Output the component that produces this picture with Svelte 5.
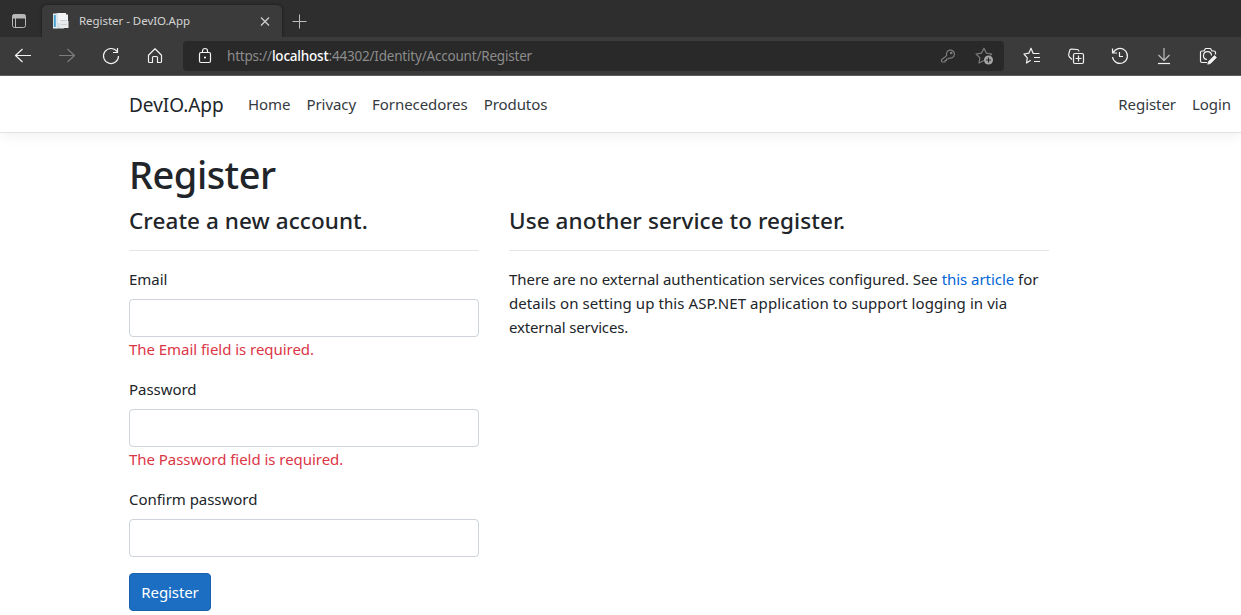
<script>
  const navigation = ['Home', 'Privacy', 'Fornecedores', 'Produtos'];
  const fields = [
    { id: 'email', label: 'Email', type: 'email', error: 'The Email field is required.' },
    { id: 'password', label: 'Password', type: 'password', error: 'The Password field is required.' },
    { id: 'confirm', label: 'Confirm password', type: 'password', error: '' }
  ];
</script>

<div class="browser">
  <div class="tabs">
    <svg class="panel" width="16" height="16" viewBox="0 0 16 16" fill="none" stroke="#b8b8b8">
      <rect x="1.5" y="1.5" width="13" height="13" rx="2" />
      <path d="M2 2h12v3H2z" fill="#b8b8b8" /><path d="M4.5 5v9" />
    </svg>
    <div class="tab">
      <svg width="18" height="18" viewBox="0 0 18 18">
        <path d="M1 1.500h4v15H1z" fill="#e9f0f4" /><path d="M1.800 3h2v12h-2z" fill="#4b9fd0" />
        <path d="M4.500 1h7.500v15.500H4.500z" fill="#d5e1e8" />
        <path d="M6 1h8v10H6zM12.500 2.500H16v12h-3.500z" fill="#f3f4f5" />
        <path d="M8 9h8.500v7H8z" fill="#e9ebed" /><path d="M8 8.500h7M9 12.500h6" stroke="#cdd0d3" />
      </svg>
      <span class="tab-title">Register - DevIO.App</span>
      <svg class="close" width="10" height="10" viewBox="0 0 10 10" stroke="#d0d0d0" stroke-width="1.3"><path d="m1 1.500 8 8M9 1.500l-8 8" /></svg>
    </div>
    <svg class="plus" width="16" height="16" viewBox="0 0 16 16" stroke="#bdbdbd"><path d="M8.500 1.500v14M1.500 8.500h14" /></svg>
  </div>

  <div class="toolbar">
    <div class="history">
      <svg width="20" height="20" viewBox="0 0 20 20" class="line"><path d="M18 9.500H3M9.500 3l-7 6.500 7 6.500" /></svg>
      <svg width="20" height="20" viewBox="0 0 20 20" class="line dim"><path d="M2 9.500h15M10.500 3l7 6.500-7 6.500" /></svg>
      <svg width="20" height="20" viewBox="0 0 20 20" class="line"><path d="M16 5.500A7.500 7.500 0 1 0 17.500 10M16.500 2v4.500H12" /></svg>
      <svg width="20" height="20" viewBox="0 0 20 20" class="line"><path d="M3.500 9.200 10 2.800l6.500 6.400v6.300a1 1 0 0 1-1 1h-3v-5a1 1 0 0 0-1-1h-3a1 1 0 0 0-1 1v5h-3a1 1 0 0 1-1-1z" /></svg>
    </div>
    <div class="address">
      <svg width="20" height="20" viewBox="0 0 20 20" class="line"><rect x="4.500" y="6.500" width="11" height="10" rx="1.500" /><path d="M7.500 6.500V5a2.500 2.500 0 0 1 5 0v1.500" /><circle cx="10" cy="11.500" r=".5" fill="#f2f2f2" /></svg>
      <span class="url">https://<b>localhost</b>:44302/Identity/Account/Register</span>
      <svg class="line muted" width="20" height="20" viewBox="0 0 20 20"><path d="M8.700 9.600A4 4 0 1 1 11.500 12L10 13H8.500v1.500H7V16H4.500q-1 0-1-1v-1.200z" /><circle cx="13.200" cy="7" r=".7" /></svg>
      <svg class="line muted star" width="20" height="20" viewBox="0 0 20 20"><path d="M10 14.500 5 17l.9-5.200-3.800-3.800 5.300-.8L10 2.200l2.400 5 5.300.8-1.500 1.400" /><circle cx="14.500" cy="14" r="4.500" fill="#a5a5a5" stroke="none" /><path d="M12 14h5M14.500 11.500v5" stroke="#292929" stroke-width="1.200" /></svg>
    </div>
    <div class="tools">
      <svg width="20" height="20" viewBox="0 0 20 20" class="line"><path d="M8.700 14.200 4.500 17l.8-5.200L2 8l4.800-.8L9 2.200l2.200 5.300h6.300M12 11.500h6M12 15.500h6" /></svg>
      <svg width="20" height="20" viewBox="0 0 20 20" class="line"><path d="M6 13.500 3.500 11q-1-1-.8-2.300l1-4.400q.3-1.200 1.700-1.100l6 .3q1.300.1 1.600 2" /><rect x="7.500" y="7.500" width="10" height="10" rx="1.500" /><path d="M12.500 9.500v6M9.500 12.500h6" /></svg>
      <svg width="20" height="20" viewBox="0 0 20 20" class="line"><path d="M2.500 2.500v4.500h4.500M3 7a7.500 7.500 0 1 1-.5 4M9.500 6v4.500H13" /></svg>
      <svg width="20" height="20" viewBox="0 0 20 20" class="line"><path d="M10 2v12M4.500 9l5.500 5.500L15.500 9" stroke="#bdbdbd" /><path d="M4 17.500h12" /></svg>
      <svg width="20" height="20" viewBox="0 0 20 20" class="line"><path d="M9 16.500H4A1.500 1.500 0 0 1 2.500 15V6.500A1.500 1.500 0 0 1 4 5h2l1.500-2.500h5L14 5h2a1.500 1.500 0 0 1 1.500 1.500v2M13.500 9.500a4 4 0 1 0-4.500 4" /><path d="m16.500 9.500 2 2-6 6-2.800.7.7-2.700z" fill="#f2f2f2" stroke-width=".7" /></svg>
    </div>
  </div>
</div>

<header>
  <a class="brand" href="#home">DevIO.App</a>
  <nav>
    {#each navigation as item}<a href="#{item}">{item}</a>{/each}
  </nav>
  <nav class="account"><a href="#register">Register</a><a href="#login">Login</a></nav>
</header>

<main>
  <h1>Register</h1>
  <div class="columns">
    <section>
      <h4>Create a new account.</h4>
      <hr />
      <form novalidate>
        {#each fields as field}
          <div class="field">
            <label for={field.id}>{field.label}</label>
            <input id={field.id} type={field.type} />
            {#if field.error}<span class="error">{field.error}</span>{/if}
          </div>
        {/each}
        <button type="button">Register</button>
      </form>
    </section>
    <section>
      <h4>Use another service to register.</h4>
      <hr />
      <p>
        <span class="intro">There are no external authentication services configured. See <a href="#article">this article</a> for</span>
        <span class="details">details on setting up this ASP.NET application to support logging in via</span>
        <span class="ending">external services.</span>
      </p>
    </section>
  </div>
</main>

<style>
  :global(body) { margin: 0; background: #fff; overflow: hidden; font: 400 15px/24px 'Noto Sans', sans-serif; letter-spacing: -.04px; color: #212529; }
  * { box-sizing: border-box; }
  svg { display: block; flex: none; }
  a { text-decoration: none; }
  .browser { height: 76px; background: #3b3b3b; border-bottom: 1px solid #606060; }
  .tabs { height: 37px; display: flex; align-items: flex-end; background: #2e2e2e; }
  .panel { margin: 0 15px 8px 11px; }
  .tab { width: 240px; height: 32px; display: flex; align-items: center; padding: 0 12px 0 10px; border-radius: 5px 5px 0 0; background: #3b3b3b; box-shadow: 0 0 3px #171717; clip-path: inset(-3px -3px 0); }
  .tab-title { margin-left: 9px; font-size: 11.500px; color: #d4d4d4; white-space: nowrap; }
  .close { margin-left: auto; }
  .plus { margin: 0 0 8px 9px; }
  .toolbar { height: 38px; display: flex; align-items: center; }
  .history { width: 183px; padding-left: 13px; display: flex; gap: 24px; }
  .line { fill: none; stroke: #f2f2f2; stroke-width: 1.2; stroke-linejoin: round; }
  .dim { stroke: #7c7c7c; }
  .muted { stroke: #7c7c7c; }
  .address { width: 821px; height: 30px; display: flex; align-items: center; padding: 0 10px 0 12px; border-radius: 4px; background: #292929; }
  .url { flex: 1; margin-left: 12px; font-size: 13.500px; letter-spacing: -.2px; color: #8c8c8c; white-space: nowrap; }
  .url b { color: #fff; font-weight: 500; }
  .star { margin-left: 16px; }
  .tools { display: flex; gap: 24px; margin-left: 18px; }
  header { height: 57px; display: flex; align-items: center; padding: 0 10px 0 129px; border-bottom: 1px solid #dee2e6; box-shadow: 0 4px 12px rgba(0, 0, 0, .05); white-space: nowrap; }
  header a { color: #343a40; }
  header .brand { width: 119px; padding-top: 1px; font-size: 19px; color: #212529; }
  nav { display: flex; gap: 16px; }
  nav a { letter-spacing: -.06px; }
  .account { margin-left: auto; }
  main { padding: 17px 0 0 129px; }
  h1 { margin: 0 0 8px; font-size: 38px; line-height: 48px; font-weight: 550; letter-spacing: -.5px; }
  .columns { display: grid; grid-template-columns: 350px 540px; gap: 30px; }
  h4 { margin: 0 0 15px; font-size: 22.500px; line-height: 29px; font-weight: 500; letter-spacing: .07px; white-space: nowrap; }
  hr { margin: 0 0 16px; border: 0; border-top: 1px solid #e5e5e5; }
  form { display: block; }
  .field { display: flex; flex-direction: column; align-items: flex-start; margin-bottom: 16px; }
  label { margin-bottom: 8px; }
  input { width: 100%; height: 38px; padding: 6px 12px; border: 1px solid #ced4da; border-radius: 4px; background: #fff; font: inherit; }
  .error { color: #dc3545; }
  button { width: 82px; height: 38px; padding: 0; border: 1px solid #1861ac; border-radius: 4px; background: #1b6ec2; color: #fff; font: inherit; letter-spacing: -.1px; }
  p { margin: 0; display: flex; flex-direction: column; align-items: flex-start; white-space: nowrap; }
  .details { letter-spacing: .08px; }
  .ending { letter-spacing: -.15px; }
  p a { color: #0366d6; }
</style>
